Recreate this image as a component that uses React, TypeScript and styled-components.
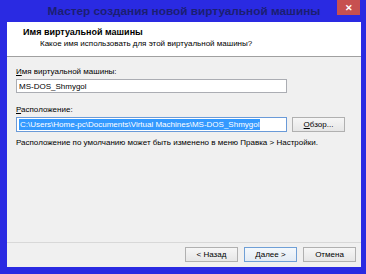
import React from "react";
import styled, { createGlobalStyle } from "styled-components";

const Global = createGlobalStyle`
  html, body { margin: 0; padding: 0; }
  body {
    width: 366px;
    height: 274px;
    overflow: hidden;
    background: #2a2ae2;
    font-family: "Liberation Sans", Arial, sans-serif;
  }
`;

const Window = styled.div`
  width: 366px;
  height: 274px;
  background: #2a2ae2;
  display: flex;
  flex-direction: column;
  box-sizing: border-box;
  padding: 0 5px 7px 7px;
`;

const TitleBar = styled.div`
  height: 22px;
  display: flex;
  align-items: center;
  justify-content: center;
  position: relative;
`;

const Title = styled.div`
  font-weight: 700;
  font-size: 11.8px;
  color: #1b1f72;
  white-space: nowrap;
  margin-top: -1px;
`;

const CloseBtn = styled.div`
  position: absolute;
  top: 0;
  right: 1px;
  width: 23px;
  height: 15px;
  background: #c75050;
  display: flex;
  align-items: center;
  justify-content: center;
  color: #fff;
  font-size: 9px;
  font-weight: 700;
`;

const Client = styled.div`
  flex: 1;
  display: flex;
  flex-direction: column;
  background: #f0f0f0;
`;

const Header = styled.div`
  height: 35px;
  background: #ffffff;
  border-bottom: 1px solid #a0a0a0;
  box-sizing: border-box;
  padding: 4px 0 0 16px;
`;

const HeadTitle = styled.div`
  font-size: 9px;
  font-weight: 700;
  color: #000;
  line-height: 12px;
`;

const HeadSub = styled.div`
  font-size: 8px;
  color: #000;
  line-height: 12px;
  padding-left: 17px;
`;

const Body = styled.div`
  flex: 1;
  padding: 9px 0 0 9px;
  display: flex;
  flex-direction: column;
`;

const Label = styled.div<{ $top?: number }>`
  font-size: 8px;
  color: #000;
  line-height: 11px;
  margin-top: ${(p) => p.$top ?? 0}px;
`;

const Row = styled.div`
  display: flex;
  align-items: center;
  gap: 5px;
  margin-top: 2px;
`;

const Input = styled.div<{ $focus?: boolean }>`
  width: 271px;
  height: ${(p) => (p.$focus ? 15 : 14)}px;
  box-sizing: border-box;
  background: #fff;
  border: 1px solid ${(p) => (p.$focus ? "#6a9ad8" : "#abadb3")};
  display: flex;
  align-items: center;
  padding: 0 2px;
  font-size: 8px;
  color: #000;
  white-space: nowrap;
  overflow: hidden;
`;

const Selected = styled.span`
  background: #3399ff;
  color: #fff;
  line-height: 11px;
  padding: 0 1px;
`;

const Button = styled.div<{ $default?: boolean }>`
  width: 53px;
  height: 15px;
  box-sizing: border-box;
  border: 1px solid ${(p) => (p.$default ? "#6f9fd6" : "#b0b0b0")};
  background: ${(p) =>
    p.$default
      ? "linear-gradient(#f4f8fc, #e3ebf4)"
      : "linear-gradient(#f6f6f6, #e6e6e6)"};
  display: flex;
  align-items: center;
  justify-content: center;
  font-size: 8px;
  color: #000;
`;

const Note = styled.div`
  font-size: 8px;
  color: #000;
  line-height: 11px;
  margin-top: 5px;
  white-space: nowrap;
`;

const Footer = styled.div`
  height: 23px;
  border-top: 1px solid #d8d8d8;
  display: flex;
  justify-content: flex-end;
  align-items: center;
  gap: 6px;
  padding: 0 5px 0 0;
  margin-bottom: 1px;
`;

export default function App() {
  return (
    <>
      <Global />
      <Window>
        <TitleBar>
          <Title>Мастер создания новой виртуальной машины</Title>
          <CloseBtn>✕</CloseBtn>
        </TitleBar>
        <Client>
          <Header>
            <HeadTitle>Имя виртуальной машины</HeadTitle>
            <HeadSub>Какое имя использовать для этой виртуальной машины?</HeadSub>
          </Header>
          <Body>
            <Label>
              <u>И</u>мя виртуальной машины:
            </Label>
            <Row>
              <Input>MS-DOS_Shmygol</Input>
            </Row>
            <Label $top={11}>
              <u>Р</u>асположение:
            </Label>
            <Row>
              <Input $focus>
                <Selected>C:\Users\Home-pc\Documents\Virtual Machines\MS-DOS_Shmygol</Selected>
              </Input>
              <Button>
                <u>О</u>бзор...
              </Button>
            </Row>
            <Note>
              Расположение по умолчанию может быть изменено в меню Правка &gt; Настройки.
            </Note>
          </Body>
          <Footer>
            <Button>&lt; Назад</Button>
            <Button $default>Далее &gt;</Button>
            <Button>Отмена</Button>
          </Footer>
        </Client>
      </Window>
    </>
  );
}
